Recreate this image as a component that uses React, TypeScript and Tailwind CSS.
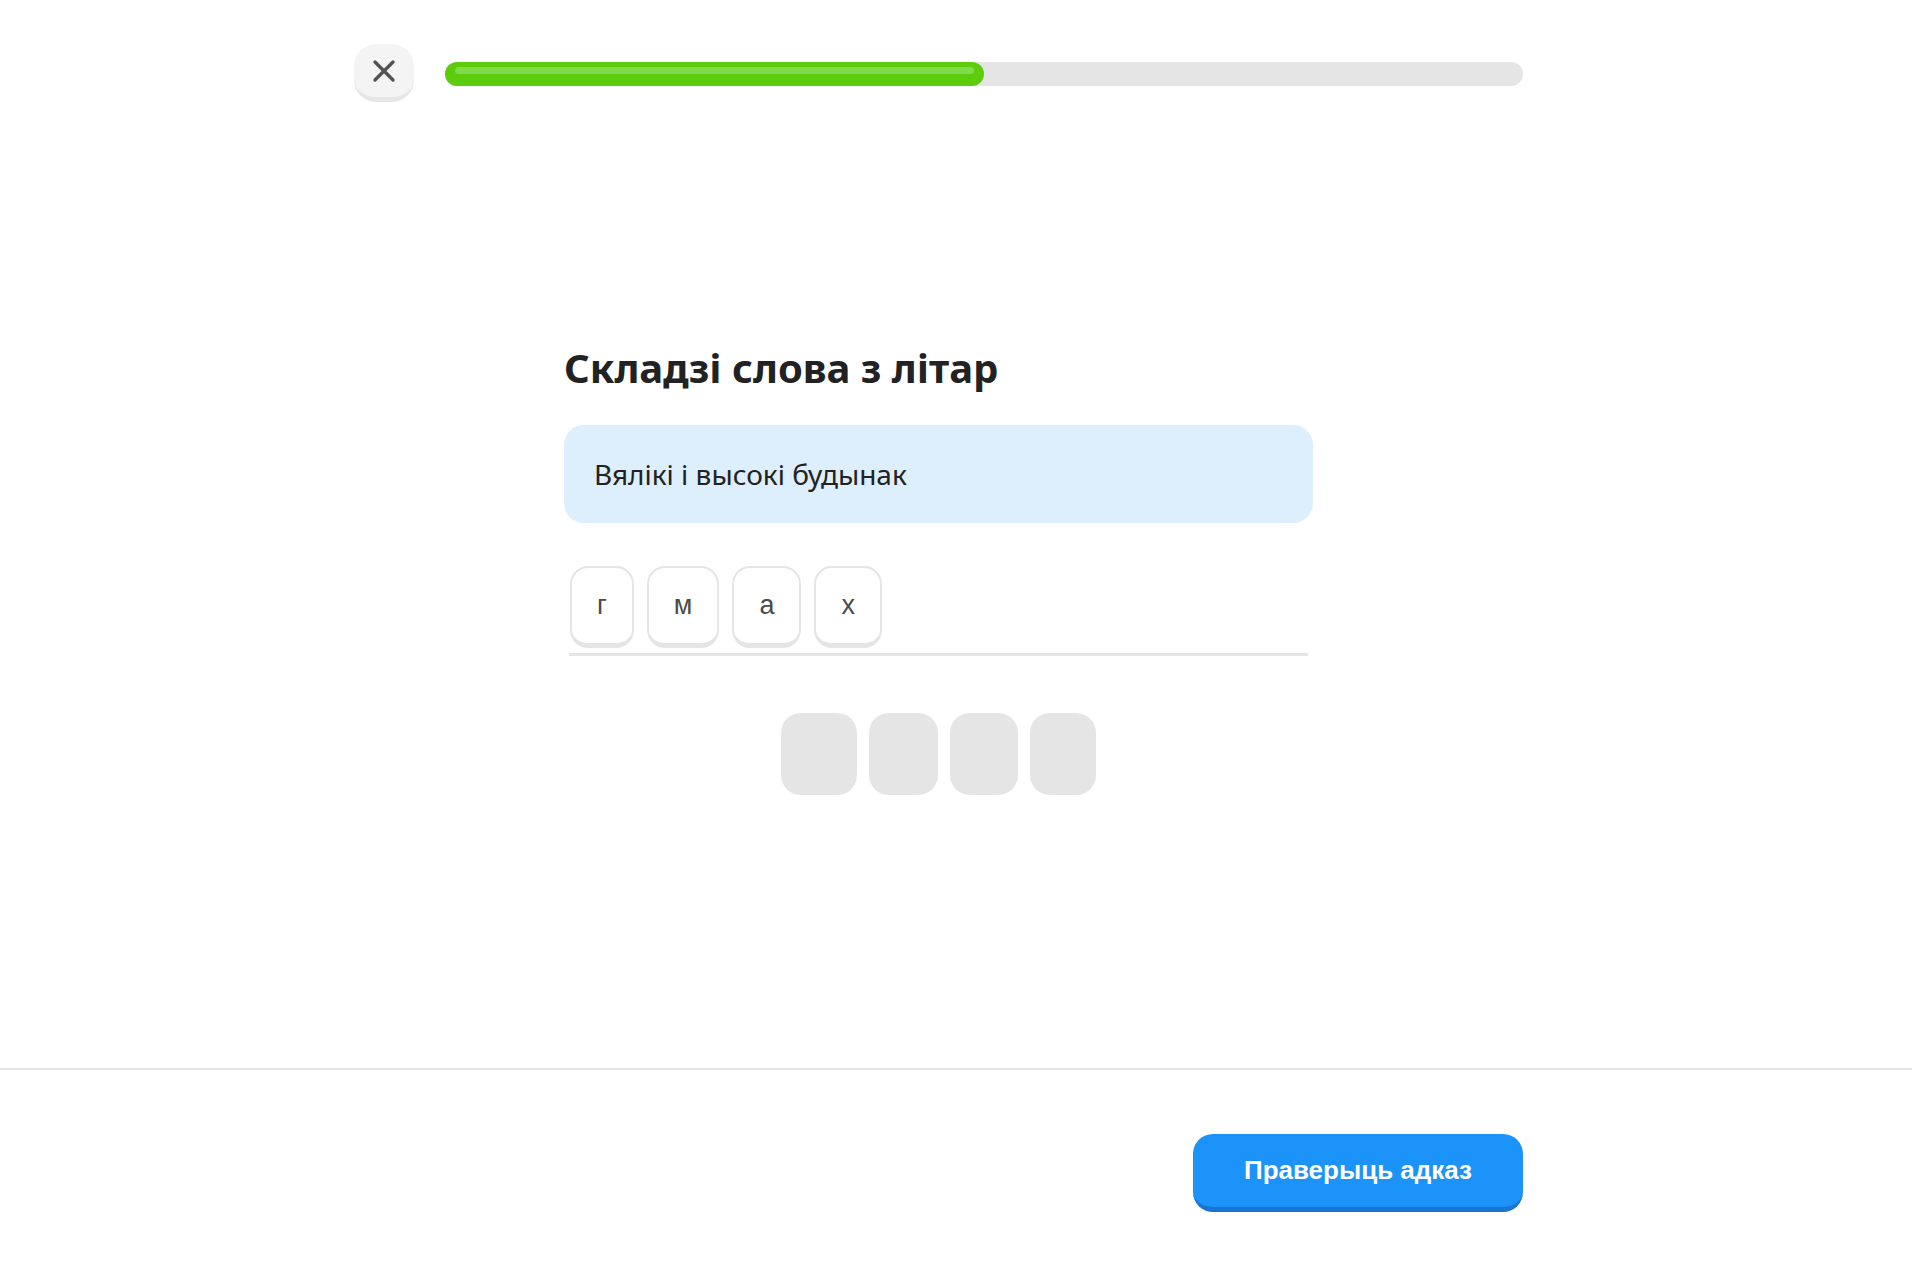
import React from "react";

const letters = ["г", "м", "а", "х"];
const slotWidths = ["w-[76px]", "w-[69px]", "w-[68px]", "w-[66px]"];

export default function App() {
  return (
    <div className="flex h-[1270px] flex-col bg-white font-['Noto_Sans',sans-serif] text-[#222]">
      {/* top bar */}
      <div className="ml-[354px] flex w-[1169px] items-center gap-[31px] pt-[44px]">
        <button className="flex h-[58px] w-[60px] items-center justify-center rounded-[22px] border-b-[5px] border-[#e6e6e6] bg-[#f4f4f4]">
          <svg width="24" height="24" viewBox="0 0 24 24">
            <path
              d="M3 3 L21 21 M21 3 L3 21"
              stroke="#545454"
              strokeWidth="3.4"
              strokeLinecap="round"
            />
          </svg>
        </button>
        <div className="mt-[2px] h-6 flex-1 rounded-full bg-[#e5e5e5]">
          <div className="h-6 w-1/2 rounded-full bg-[#5ccc0c] px-[10px] pt-[5px]">
            <div className="h-[7px] rounded-full bg-[#7fdb47]" />
          </div>
        </div>
      </div>

      {/* exercise */}
      <div className="ml-[354px] w-[1169px]">
        <div className="mx-auto w-[749px] pt-[242px]">
          <h1 className="text-[40px] leading-[48px] font-bold text-[#222]">
            Складзі слова з літар
          </h1>

          <div className="mt-[33px] flex h-[98px] items-center rounded-[20px] bg-[#ddeefd] px-[30px] text-[28px] text-[#222]">
            Вялікі і высокі будынак
          </div>

          <div className="mx-[5px] mt-[43px] flex gap-[13px] border-b-[3px] border-[#e5e5e5] pb-[5px] pl-[1px]">
            {letters.map((l) => (
              <div
                key={l}
                className="flex h-[82px] items-center justify-center rounded-[18px] border-2 border-b-[5px] border-[#e5e5e5] bg-white px-[25px] font-['Liberation_Sans',sans-serif] text-[27px] text-[#4b4b4b]"
              >
                {l}
              </div>
            ))}
          </div>

          <div className="mt-[57px] flex justify-center gap-[12px]">
            {slotWidths.map((w, i) => (
              <div key={i} className={`h-[82px] rounded-[20px] bg-[#e5e5e5] ${w}`} />
            ))}
          </div>
        </div>
      </div>

      <div className="flex-1" />

      {/* footer */}
      <div className="h-[202px] border-t-2 border-[#e5e5e5]">
        <div className="ml-[354px] flex w-[1169px] justify-end pt-[64px]">
          <button className="flex h-[78px] w-[330px] items-center justify-center rounded-[20px] border-b-[5px] border-[#1a74d2] bg-[#1b93f8] font-['Liberation_Sans',sans-serif] text-[26px] font-bold text-white">
            Праверыць адказ
          </button>
        </div>
      </div>
    </div>
  );
}
